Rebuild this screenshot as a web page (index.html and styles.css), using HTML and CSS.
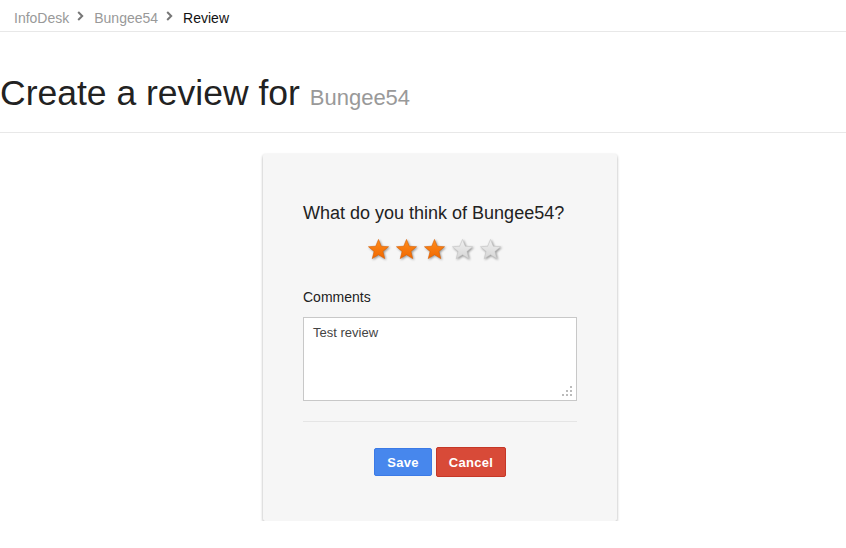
FILE: index.html
```html
<!DOCTYPE html>
<html>
<head>
<meta charset="utf-8">
<link rel="stylesheet" href="styles.css">
</head>
<body>
<nav class="crumbs">
  <a class="crumb">InfoDesk</a>
  <svg class="chev" width="7" height="10" viewBox="0 0 7 10"><path d="M1.2 1 L5.2 5 L1.2 9" fill="none" stroke="#777" stroke-width="2"/></svg>
  <a class="crumb">Bungee54</a>
  <svg class="chev" width="7" height="10" viewBox="0 0 7 10"><path d="M1.2 1 L5.2 5 L1.2 9" fill="none" stroke="#777" stroke-width="2"/></svg>
  <span class="crumb current">Review</span>
</nav>
<header class="page-head">
  <h1>Create a review for <small>Bungee54</small></h1>
</header>
<main class="main">
  <section class="card">
    <h2 class="question">What do you think of Bungee54?</h2>
    <div class="stars">
      <svg class="star" viewBox="0 0 24 24"><defs>
        <linearGradient id="go" x1="0" y1="0" x2="0" y2="1"><stop offset="0" stop-color="#ff8c1c"/><stop offset="1" stop-color="#f06800"/></linearGradient>
        <linearGradient id="gg" x1="0" y1="0" x2="0" y2="1"><stop offset="0" stop-color="#f0f0f0"/><stop offset="1" stop-color="#d6d6d6"/></linearGradient>
      </defs><path class="on" d="M12 1.5 L14.9 8.6 L22.5 9.1 L16.6 14 L18.5 21.5 L12 17.4 L5.5 21.5 L7.4 14 L1.5 9.1 L9.1 8.6 Z"/></svg>
      <svg class="star" viewBox="0 0 24 24"><path class="on" d="M12 1.5 L14.9 8.6 L22.5 9.1 L16.6 14 L18.5 21.5 L12 17.4 L5.5 21.5 L7.4 14 L1.5 9.1 L9.1 8.6 Z"/></svg>
      <svg class="star" viewBox="0 0 24 24"><path class="on" d="M12 1.5 L14.9 8.6 L22.5 9.1 L16.6 14 L18.5 21.5 L12 17.4 L5.5 21.5 L7.4 14 L1.5 9.1 L9.1 8.6 Z"/></svg>
      <svg class="star" viewBox="0 0 24 24"><path class="off" d="M12 1.5 L14.9 8.6 L22.5 9.1 L16.6 14 L18.5 21.5 L12 17.4 L5.5 21.5 L7.4 14 L1.5 9.1 L9.1 8.6 Z"/></svg>
      <svg class="star" viewBox="0 0 24 24"><path class="off" d="M12 1.5 L14.9 8.6 L22.5 9.1 L16.6 14 L18.5 21.5 L12 17.4 L5.5 21.5 L7.4 14 L1.5 9.1 L9.1 8.6 Z"/></svg>
    </div>
    <label class="label">Comments</label>
    <div class="field">
      <textarea class="comments">Test review</textarea>
      <svg class="grip" width="12" height="12" viewBox="0 0 12 12">
        <rect x="9" y="1" width="2" height="2" fill="#bbb"/>
        <rect x="5" y="5" width="2" height="2" fill="#bbb"/>
        <rect x="9" y="5" width="2" height="2" fill="#bbb"/>
        <rect x="1" y="9" width="2" height="2" fill="#bbb"/>
        <rect x="5" y="9" width="2" height="2" fill="#bbb"/>
        <rect x="9" y="9" width="2" height="2" fill="#bbb"/>
      </svg>
    </div>
    <hr class="rule">
    <div class="actions">
      <button class="btn save">Save</button>
      <button class="btn cancel">Cancel</button>
    </div>
  </section>
</main>
</body>
</html>
```
FILE: styles.css
```css
html, body {
  margin: 0;
  padding: 0;
  background: #fff;
  font-family: "Liberation Sans", Arial, sans-serif;
  color: #222;
}
.crumbs {
  display: flex;
  align-items: center;
  height: 32px;
  padding: 4px 0 0 14px;
  border-bottom: 1px solid #e8e8e8;
  font-size: 14px;
  box-sizing: border-box;
}
.crumb {
  color: #999;
}
.crumb.current {
  color: #111;
}
.chev {
  margin: 0 10px 0 8px;
  position: relative;
  top: -2px;
}
.page-head {
  height: 100px;
  border-bottom: 1px solid #e8e8e8;
  display: flex;
  align-items: center;
}
.page-head h1 {
  margin: 0;
  margin-top: 22px;
  font-weight: normal;
  font-size: 35.5px;
  color: #222;
}
.page-head small {
  font-size: 22px;
  color: #999;
}
.main {
  display: flex;
  justify-content: center;
  padding-top: 21px;
  padding-left: 34px;
}
.card {
  width: 354px;
  box-sizing: border-box;
  background: #f6f6f6;
  box-shadow: 0 1px 3px rgba(0,0,0,0.2), 0 2px 3px rgba(0,0,0,0.15);
  border-radius: 2px;
  padding: 48px 40px 44px;
  display: flex;
  flex-direction: column;
}
.question {
  margin: 0;
  font-weight: normal;
  font-size: 18px;
  color: #222;
  line-height: 22px;
}
.stars {
  display: flex;
  gap: 5px;
  margin: 14px 0 0 64px;
}
.star {
  width: 23px;
  height: 23px;
  overflow: visible;
}
.star .on {
  fill: url(#go);
  stroke: #d85f00;
  stroke-width: 0.6;
  filter: drop-shadow(1.5px 1.5px 1.2px rgba(0,0,0,0.4));
}
.star .off {
  fill: url(#gg);
  stroke: #c4c4c4;
  stroke-width: 0.6;
  filter: drop-shadow(1.5px 1.5px 1.2px rgba(0,0,0,0.4));
}
.label {
  margin-top: 28px;
  font-size: 14px;
  color: #222;
  line-height: 16px;
}
.field {
  position: relative;
  margin-top: 12px;
  width: 274px;
  height: 84px;
}
.comments {
  display: block;
  width: 274px;
  height: 84px;
  margin: 0;
  box-sizing: border-box;
  border: 1px solid #c8c8c8;
  background: #fff;
  padding: 7px 9px;
  font-family: "Liberation Sans", Arial, sans-serif;
  font-size: 13px;
  color: #444;
  resize: none;
  border-radius: 0;
}
.grip {
  position: absolute;
  right: 4px;
  bottom: 4px;
}
.rule {
  border: 0;
  border-top: 1px solid #e5e5e5;
  margin: 20px 0 0;
  width: 274px;
}
.actions {
  display: flex;
  justify-content: center;
  align-items: center;
  gap: 4px;
  margin-top: 25px;
}
.btn {
  font-family: "Liberation Sans", Arial, sans-serif;
  font-weight: bold;
  font-size: 13px;
  color: #fff;
  border-radius: 2px;
  padding: 0;
  cursor: pointer;
  letter-spacing: 0.3px;
}
.save {
  width: 58px;
  height: 28px;
  background: #4787ed;
  border: 1px solid #3b7ae6;
}
.cancel {
  width: 70px;
  height: 30px;
  background: #d84a38;
  border: 1px solid #c53727;
}
```
